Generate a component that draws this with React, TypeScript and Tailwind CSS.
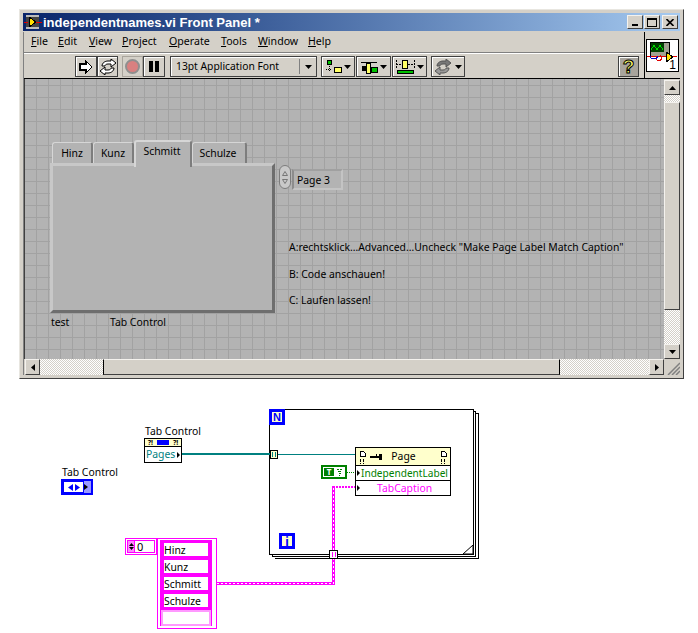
const raised = "border border-t-[#f4f2ee] border-l-[#f4f2ee] border-r-[#404040] border-b-[#404040]";
const dither = "bg-[repeating-conic-gradient(#d4d0c8_0_25%,#ffffff_0_50%)] bg-[size:2px_2px]";
const tahoma = "font-['Noto_Sans','Open_Sans',sans-serif]";

const menus = [
  { label: "File", width: "w-[27px]" },
  { label: "Edit", width: "w-[31px]" },
  { label: "View", width: "w-[33px]" },
  { label: "Project", width: "w-[47px]" },
  { label: "Operate", width: "w-[52px]" },
  { label: "Tools", width: "w-[37px]" },
  { label: "Window", width: "w-[50px]" },
  { label: "Help", width: "w-[30px]" },
];

const ToolButton = ({ className, children }: { className: string; children: React.ReactNode }) => (
  <div className={`h-[21px] flex items-center justify-center bg-[#d4d0c8] border border-[#404040] shadow-[inset_1px_1px_0_#fff] ${className}`}>
    {children}
  </div>
);

const Caret = () => (
  <svg width="7" height="4" viewBox="0 0 7 4" className="shrink-0">
    <path d="M0 0h7L3.5 4z" fill="#000" />
  </svg>
);

const RunIcon = () => (
  <svg width="14" height="14" viewBox="0 0 14 14" shapeRendering="crispEdges">
    <path d="M7 1l6 6-6 6v-3H1V4h6z" fill="#fff" stroke="#000" strokeWidth="1.3" />
  </svg>
);

const RerunIcon = ({ gray }: { gray?: boolean }) => (
  <svg width="18" height="16" viewBox="0 0 18 16">
    <path d="M3 7c0-3 3-5 6-5h3V0l5 4-5 4V5H9C7 5 6 6 6 7z" fill={gray ? "#777" : "#fff"} stroke={gray ? "#555" : "#000"} />
    <path d="M15 9c0 3-3 5-6 5H6v2l-5-4 5-4v3h3c2 0 3-1 3-2z" fill={gray ? "#999" : "#fff"} stroke={gray ? "#555" : "#000"} />
  </svg>
);

const FrontPanel = () => (
  <div className={`relative flex-1 ${tahoma} text-[10.4px] leading-[14px] text-black bg-[#b3b3b3] bg-[linear-gradient(#a2a2a2_1px,transparent_1px),linear-gradient(90deg,#a2a2a2_1px,transparent_1px)] bg-[size:12px_12px] bg-[position:11px_6px] border-l border-[#404040]`}>
    {/* tabs */}
    <div className="absolute left-[27px] top-[63px] w-[41px] h-[22px] pb-[2px] flex items-center justify-center bg-[#b3b3b3] border-t border-l border-[#d6d6d6] border-r-2 border-r-[#7d7d7d] rounded-t-[3px]">Hinz</div>
    <div className="absolute left-[68px] top-[63px] w-[41px] h-[22px] pb-[2px] flex items-center justify-center bg-[#b3b3b3] border-t border-l border-[#d6d6d6] border-r-2 border-r-[#7d7d7d] rounded-t-[3px]">Kunz</div>
    <div className="absolute left-[167px] top-[63px] w-[55px] h-[22px] pb-[2px] pr-[2px] flex items-center justify-center bg-[#b3b3b3] border-t border-l border-[#d6d6d6] border-r-2 border-r-[#7d7d7d] rounded-t-[3px]">Schulze</div>
    {/* tab body */}
    <div className="absolute left-[25px] top-[84px] w-[225px] h-[150px] bg-[#b3b3b3] border-[3px] border-t-[#c8c8c8] border-l-[#c8c8c8] border-r-[#6e6e6e] border-b-[#6e6e6e]" />
    <div className="absolute left-[109px] top-[61px] w-[58px] h-[27px] flex items-start pt-[2px] pr-[2px] justify-center bg-[#b3b3b3] border-t-2 border-l-2 border-[#d6d6d6] border-r-2 border-r-[#7d7d7d] rounded-t-[3px]">Schmitt</div>
    {/* page selector */}
    <div className="absolute left-[254px] top-[86px] w-[12px] h-[24px] rounded-full bg-[#c9c9c9] border border-[#7d7d7d] flex flex-col items-center justify-center gap-[3px]">
      <svg width="6" height="5" viewBox="0 0 6 5"><path d="M3 0.5L5.5 4.5H0.5z" fill="none" stroke="#777" /></svg>
      <svg width="6" height="5" viewBox="0 0 6 5"><path d="M3 4.5L5.5 0.5H0.5z" fill="none" stroke="#777" /></svg>
    </div>
    <div className="absolute left-[267px] top-[90px] w-[51px] h-[21px] pl-[3px] pt-[1px] flex items-center bg-[#b3b3b3] border-2 border-t-[#a0a0a0] border-l-[#8c8c8c] border-r-[#c4c4c4] border-b-[#c4c4c4]">Page 3</div>
    {/* notes */}
    <div className="absolute left-[264px] top-[161px] whitespace-nowrap">A:rechtsklick…Advanced…Uncheck "Make Page Label Match Caption"</div>
    <div className="absolute left-[264px] top-[188px] whitespace-nowrap">B: Code anschauen!</div>
    <div className="absolute left-[264px] top-[214px] whitespace-nowrap">C: Laufen lassen!</div>
    <div className="absolute left-[26px] top-[236px]">test</div>
    <div className="absolute left-[85px] top-[236px]">Tab Control</div>
  </div>
);

const Diagram = () => (
  <div className={`relative h-[254px] ${tahoma} text-[10.4px] leading-[13px] text-black`}>
    {/* coordinates in here: y = page y - 379 */}
    <div className="absolute left-[62px] top-[87px]">Tab Control</div>
    <div className="absolute left-[61px] top-[100px] w-[32px] h-[16px] border-2 border-[#0000ff] bg-white flex">
      <div className="flex-1 border border-[#0000ff] flex items-center justify-center">
        <svg width="12" height="7" viewBox="0 0 12 7"><path d="M0 3.5L5 0v7zM7 0l5 3.5L7 7z" fill="#0000ff" /></svg>
      </div>
      <div className="w-[7px] bg-[#9999ff] flex items-center">
        <svg width="4" height="6" viewBox="0 0 4 6"><path d="M0 0l4 3-4 3z" fill="#000" /></svg>
      </div>
    </div>

    <div className="absolute left-[145px] top-[46px]">Tab Control</div>
    <div className="absolute left-[144px] top-[59px] w-[38px] h-[25px] border border-black bg-white">
      <div className="h-[8px] bg-[#ffffcc] border-b border-black flex items-center justify-center gap-[4px] text-[7px] leading-none font-bold">
        <span>?!</span><span className="w-[12px] h-[5px] bg-[#0000ff]" /><span>?!</span>
      </div>
      <div className="h-[15px] pl-[1px] flex items-center text-[#008080]">Pages
        <svg width="3" height="6" viewBox="0 0 3 6" className="ml-[2px]"><path d="M0 0l3 3-3 3z" fill="#000" /></svg>
      </div>
    </div>

    {/* for loop with stacked frames */}
    <div className="absolute left-[275px] top-[34px] w-[204px] h-[146px] border-r border-b border-black border-t border-t-black" />
    <div className="absolute left-[272px] top-[32px] w-[204px] h-[146px] bg-white border border-black" />
    <div className="absolute left-[269px] top-[30px] w-[205px] h-[146px] bg-white border border-black">
      <svg className="absolute right-0 bottom-0" width="10" height="9" viewBox="0 0 10 9"><path d="M0 9L10 0v9z" fill="#fff" stroke="#000" /></svg>
    </div>
    <div className="absolute left-[269px] top-[30px] w-[16px] h-[16px] border-[3px] border-[#0000ff] bg-[#ffffcc] flex items-center justify-center font-['Liberation_Sans',sans-serif] text-[11px] font-bold text-[#0000ff]">N</div>
    <div className="absolute left-[279px] top-[154px] w-[16px] h-[16px] border-[3px] border-[#0000ff] bg-[#ffffcc] flex items-center justify-center font-['Noto_Sans',sans-serif] text-[12px] font-bold text-[#0000ff]">i</div>

    {/* wires */}
    <svg className="absolute left-0 top-0" width="698" height="254" shapeRendering="crispEdges">
      <path d="M182 75H270" stroke="#008080" strokeWidth="2" fill="none" />
      <path d="M277 75.5H355" stroke="#008080" strokeWidth="1" fill="none" />
      <path d="M347 93.5H355" stroke="#008000" strokeWidth="1" strokeDasharray="1 1" fill="none" />
      <path d="M333 108H355" stroke="#ff00ff" strokeWidth="2" strokeDasharray="2 1" fill="none" />
      <path d="M333.5 171V107" stroke="#ff00ff" strokeWidth="3" fill="none" />
      <path d="M333.5 171V107" stroke="#ffffff" strokeWidth="1" strokeDasharray="2 2" fill="none" />
      <path d="M333.5 179V204.5H216" stroke="#ff00ff" strokeWidth="3" fill="none" />
      <path d="M333.5 179V204.5H216" stroke="#ffffff" strokeWidth="1" strokeDasharray="2 2" fill="none" />
    </svg>

    {/* tunnels */}
    <div className="absolute left-[270px] top-[71px] w-[8px] h-[9px] bg-[#ffffcc] border border-black flex items-center justify-center">
      <span className="w-[4px] h-[5px] border-x border-[#008080]" />
    </div>
    <div className="absolute left-[329px] top-[171px] w-[9px] h-[9px] bg-white border border-black flex items-center justify-center">
      <span className="w-[4px] h-[5px] border-x border-[#ff00ff]" />
    </div>

    {/* Page property node */}
    <div className="absolute left-[355px] top-[68px] w-[96px] h-[49px] border border-black bg-white">
      <div className="h-[18px] bg-[#ffffcc] border-b border-black flex items-center justify-center relative">
        <svg className="absolute left-[3px] top-[2px]" width="8" height="14" viewBox="0 0 8 14" shapeRendering="crispEdges">
          <path d="M1 1h3l2 2v3H1z" fill="#fff" stroke="#000" />
          <path d="M1 9h1v3H1zM4 9h1v3H4zM1 13h1v1H1zM4 13h1v1H4z" fill="#000" />
        </svg>
        <svg className="absolute left-[14px] top-[6px]" width="12" height="6" viewBox="0 0 12 6"><path d="M0 2h6V0h1v2h2V0h3v6H9V4H0z" fill="#000" /></svg>
        <span className="ml-[1px]">Page</span>
        <svg className="absolute right-[2px] top-[2px]" width="8" height="14" viewBox="0 0 8 14" shapeRendering="crispEdges">
          <path d="M1 1h3l2 2v3H1z" fill="#fff" stroke="#000" />
          <path d="M1 9h1v3H1zM4 9h1v3H4zM1 13h1v1H1zM4 13h1v1H4z" fill="#000" />
        </svg>
      </div>
      <div className="h-[15px] border-b border-black flex items-center pl-[1px] text-[#008000] text-[10.1px] whitespace-nowrap">
        <svg width="3" height="6" viewBox="0 0 3 6" className="mr-[1px]"><path d="M0 0l3 3-3 3z" fill="#000" /></svg>
        IndependentLabel
      </div>
      <div className="h-[14px] flex items-center pl-[1px] text-[#ff00ff]">
        <svg width="3" height="6" viewBox="0 0 3 6"><path d="M0 0l3 3-3 3z" fill="#000" /></svg>
        <span className="ml-[17px]">TabCaption</span>
      </div>
    </div>

    {/* boolean constant */}
    <div className="absolute left-[321px] top-[86px] w-[26px] h-[14px] border-2 border-[#008000] bg-white flex items-center">
      <span className="ml-[1px] w-[10px] h-[8px] bg-[#008000] text-white text-[8px] leading-[8px] font-bold text-center">T</span>
      <svg className="ml-[3px]" width="5" height="7" viewBox="0 0 5 7" shapeRendering="crispEdges"><path d="M0 0h2v1H0zM3 0h2v1H3zM1 2h3v1H1zM2 4h2v1H2zM2 6h1v1H2z" fill="#008000" /></svg>
    </div>

    {/* array constant */}
    <div className="absolute left-[125px] top-[159px] w-[32px] h-[17px] border border-[#ff00ff] p-[1px]">
      <div className="h-full border border-[#ff00ff] flex items-center text-[11px]">
        <div className="w-[7px] h-full bg-[#ff88ff] border-r border-[#ff00ff] flex flex-col items-center justify-center gap-[1px]">
          <svg width="5" height="3" viewBox="0 0 5 3"><path d="M2.5 0L5 3H0z" fill="#000" /></svg>
          <svg width="5" height="3" viewBox="0 0 5 3"><path d="M2.5 3L5 0H0z" fill="#000" /></svg>
        </div>
        <span className="ml-[2px]">0</span>
      </div>
    </div>
    <div className="absolute left-[157px] top-[159px] w-[60px] h-[91px] border border-[#ff00ff] bg-white p-[1px]">
      <div className="h-[86px] bg-[#ff00ff] px-[4px] pt-[3px] ml-[1px] mr-[3px] flex flex-col gap-[4px]">
        {["Hinz", "Kunz", "Schmitt", "Schulze"].map((name) => (
          <div key={name} className="h-[13px] pt-[1px] bg-white flex items-center text-black">{name}</div>
        ))}
        <div className="-mx-[3px] mt-[-1px] h-[16px] bg-[#ff99ff] p-[2px]"><div className="h-full bg-white" /></div>
      </div>
    </div>
  </div>
);

export default function App() {
  return (
    <div className="w-[698px] h-[633px] bg-white overflow-hidden pt-[9px] pl-[19px]">
      {/* window */}
      <div className="w-[665px] h-[370px] p-[1px] bg-[#d4d0c8] border border-t-[#e8e6e0] border-l-[#e8e6e0] border-r-[#404040] border-b-[#404040]">
        <div className="h-full p-[2px] bg-[#d4d0c8] flex flex-col">
          <div className="h-[18px] flex items-center bg-gradient-to-r from-[#0a246a] to-[#a6caf0] pl-[1px] pr-[2px]">
            <svg width="18" height="16" viewBox="0 0 18 16" shapeRendering="crispEdges" className="shrink-0">
              <rect x="2" y="1" width="13" height="14" fill="#444" />
              <path d="M2 1h13v2H2zM2 13h13v2H2z" fill="#bbb" />
              <path d="M5 3l7 5-7 5z" fill="#ffe000" stroke="#000" />
              <path d="M0 8h4M12 8h6" stroke="#e00000" />
            </svg>
            <span className="ml-[1px] font-['Liberation_Sans',sans-serif] font-bold text-[13px] leading-none text-white whitespace-nowrap">independentnames.vi Front Panel *</span>
            <div className="ml-auto flex items-center">
              <div className={`w-[16px] h-[14px] bg-[#d4d0c8] ${raised} flex items-end justify-center pb-[2px]`}><span className="w-[6px] h-[2px] bg-black" /></div>
              <div className={`ml-[1px] w-[16px] h-[14px] bg-[#d4d0c8] ${raised} flex items-center justify-center`}><span className="w-[10px] h-[9px] border border-black border-t-2" /></div>
              <div className={`ml-[2px] w-[16px] h-[14px] bg-[#d4d0c8] ${raised} flex items-center justify-center`}>
                <svg width="8" height="7" viewBox="0 0 8 7"><path d="M0.5 0L7.5 7M7.5 0L0.5 7" stroke="#000" strokeWidth="1.6" /></svg>
              </div>
            </div>
          </div>

          <div className="flex-1 mt-[1px] flex flex-col min-h-0 border-l border-[#808080]">
            <div className="flex h-[47px] shrink-0">
              <div className="flex-1 flex flex-col">
                {/* menu bar */}
                <div className={`h-[21px] flex items-center pl-[7px] border-b border-[#808080] ${tahoma} text-[10.6px] text-black`}>
                  {menus.map((m) => (
                    <span key={m.label} className={m.width}>
                      <span className="underline">{m.label[0]}</span>{m.label.slice(1)}
                    </span>
                  ))}
                </div>
                {/* toolbar */}
                <div className="h-[26px] pt-[2px] flex items-start border-t border-white border-b border-b-black">
                  <ToolButton className="ml-[51px] w-[22px]"><RunIcon /></ToolButton>
                  <ToolButton className="w-[21px]"><RerunIcon /></ToolButton>
                  <div className="ml-[4px] w-[21px] h-[21px] flex items-center justify-center border border-[#a8a49c]">
                    <span className="w-[15px] h-[15px] rounded-full bg-[#d98080] border-2 border-[#8f8f8f]" />
                  </div>
                  <ToolButton className="w-[22px] gap-[2px]"><span className="w-[4px] h-[11px] bg-black" /><span className="w-[4px] h-[11px] bg-black" /></ToolButton>
                  <ToolButton className={`ml-[5px] w-[147px] justify-start pl-[5px] ${tahoma} text-[10.3px] text-black`}>
                    <span className="flex-1">13pt Application Font</span>
                    <span className="w-[1px] h-[15px] bg-[#808080] mr-[5px]" />
                    <span className="mr-[4px] flex"><Caret /></span>
                  </ToolButton>
                  <ToolButton className="ml-[4px] w-[34px] gap-[2px]">
                    <svg width="17" height="15" viewBox="0 0 17 15" shapeRendering="crispEdges">
                      <path d="M2 1h4v4H2z" fill="#00c000" stroke="#000" />
                      <path d="M4 7v6M1 10h6" stroke="#000" strokeDasharray="1 1" />
                      <path d="M9 8h7v5H9z" fill="#ffff66" stroke="#000" />
                    </svg>
                    <Caret />
                  </ToolButton>
                  <ToolButton className="ml-[1px] w-[35px] gap-[2px]">
                    <svg width="18" height="15" viewBox="0 0 18 15" shapeRendering="crispEdges">
                      <path d="M1 3h16" stroke="#000" />
                      <path d="M2 7h5v5H2z" fill="#000" />
                      <path d="M6 4h4v10H6z" fill="#ffff66" stroke="#000" />
                      <path d="M11 8h6v5h-6z" fill="#00c000" stroke="#000" />
                    </svg>
                    <Caret />
                  </ToolButton>
                  <ToolButton className="ml-[1px] w-[35px] gap-[2px]">
                    <svg width="20" height="16" viewBox="0 0 20 16" shapeRendering="crispEdges">
                      <path d="M1 1v8M19 1v8M1 5h18" stroke="#000" strokeDasharray="2 1" />
                      <path d="M7 1h5v8H7z" fill="#ffff66" stroke="#000" />
                      <path d="M2 11h16v3H2z" fill="#00c000" stroke="#000" />
                    </svg>
                    <Caret />
                  </ToolButton>
                  <ToolButton className="ml-[4px] w-[34px] gap-[3px]"><RerunIcon gray /><Caret /></ToolButton>
                  <ToolButton className="ml-[153px] w-[21px] bg-[#a8a49c]!">
                    <span className="font-['Liberation_Sans',sans-serif] text-[19px] leading-none font-bold text-[#ffff66] [-webkit-text-stroke:1px_#000]">?</span>
                  </ToolButton>
                </div>
              </div>
              {/* VI icon */}
              <div className="w-[36px] border-l border-black border-b border-b-black pl-[1px] pt-[7px]">
                <div className="w-[33px] h-[33px] border border-black bg-white relative">
                  <svg width="31" height="30" viewBox="0 0 31 30" shapeRendering="crispEdges">
                    <rect x="3" y="2" width="19" height="14" fill="#a0a090" stroke="#000" />
                    <rect x="4" y="3" width="13" height="9" fill="#004000" />
                    <path d="M4 10l3-5 3 5 3-5 3 5" fill="none" stroke="#00e000" />
                    <path d="M0 16h30" stroke="#e00000" />
                    <path d="M3 16c1 4 7 4 8 0" fill="none" stroke="#0000c0" />
                    <path d="M9 19a3 3 0 1 0 4-4" fill="none" stroke="#e00000" />
                    <path d="M19 12l7 5-7 5z" fill="#ffe000" stroke="#000" />
                  </svg>
                  <span className="absolute right-[2px] bottom-0 font-['Liberation_Sans',sans-serif] text-[12px] leading-none text-black">1</span>
                </div>
              </div>
            </div>

            <div className="flex-1 flex flex-col min-h-0">
              <div className="flex-1 flex min-h-0">
                <FrontPanel />
                {/* vertical scrollbar */}
                <div className="w-[16px] flex flex-col items-stretch">
                  <div className={`h-[15px] mt-[1px] bg-[#d4d0c8] ${raised} flex items-center justify-center`}><svg width="7" height="4" viewBox="0 0 7 4"><path d="M3.5 0L7 4H0z" fill="#000" /></svg></div>
                  <div className={`h-[7px] ${dither}`} />
                  <div className={`h-[208px] bg-[#d4d0c8] ${raised}`} />
                  <div className={`flex-1 ${dither}`} />
                  <div className={`h-[15px] bg-[#d4d0c8] ${raised} flex items-center justify-center`}><Caret /></div>
                </div>
              </div>
              {/* horizontal scrollbar */}
              <div className="h-[16px] shrink-0 flex">
                <div className={`w-[15px] ml-[1px] bg-[#d4d0c8] ${raised} flex items-center justify-center`}><svg width="4" height="7" viewBox="0 0 4 7"><path d="M0 3.5L4 0v7z" fill="#000" /></svg></div>
                <div className={`w-[63px] ${dither}`} />
                <div className={`w-[457px] bg-[#d4d0c8] ${raised} border-l-black border-r-black`} />
                <div className={`flex-1 ${dither}`} />
                <div className={`w-[15px] bg-[#d4d0c8] ${raised} flex items-center justify-center`}><svg width="4" height="7" viewBox="0 0 4 7"><path d="M4 3.5L0 0v7z" fill="#000" /></svg></div>
                <div className="w-[16px] bg-[#d4d0c8] flex items-end justify-end">
                  <svg width="13" height="13" viewBox="0 0 13 13"><path d="M13 1L1 13M13 5L5 13M13 9L9 13" stroke="#808080" strokeWidth="1.5" /></svg>
                </div>
              </div>
            </div>
          </div>
        </div>
      </div>
      <div className="-ml-[19px]"><Diagram /></div>
    </div>
  );
}
